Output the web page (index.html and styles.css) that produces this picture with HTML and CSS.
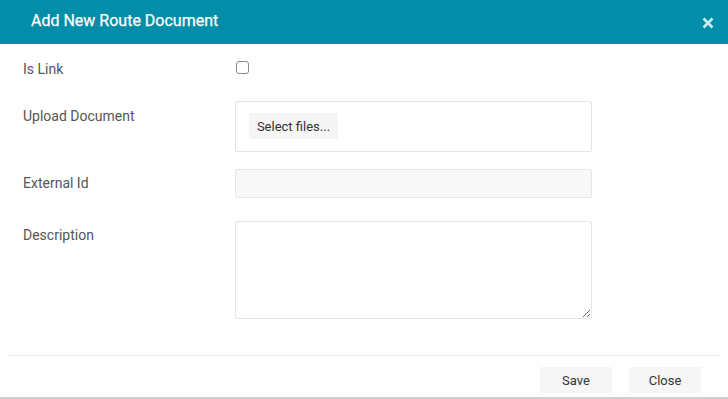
FILE: index.html
```html
<!DOCTYPE html>
<html lang="en">
  <head>
    <meta charset="UTF-8" />
    <meta name="viewport" content="width=device-width, initial-scale=1.0" />
    <title>Add New Route Document</title>
    <link rel="stylesheet" href="styles.css">
  </head>

  <body>
    <div class="dialog">
      <header class="dialog-header">
        <h1>Add New Route Document</h1>
        <button class="close-x" aria-label="Close">
          <svg width="12" height="12" viewBox="0 0 12 12">
            <path d="M1.5 1.5 L10.5 10.5 M10.5 1.5 L1.5 10.5" stroke="#cdeef3" stroke-width="2.6" fill="none" />
          </svg>
        </button>
      </header>

      <form class="dialog-body">
        <div class="row row-link">
          <label class="field-label">Is Link</label>
          <div class="field"><input type="checkbox" class="check" /></div>
        </div>

        <div class="row row-upload">
          <label class="field-label">Upload Document</label>
          <div class="field">
            <div class="upload-box">
              <button type="button" class="select-btn">Select files...</button>
            </div>
          </div>
        </div>

        <div class="row row-external">
          <label class="field-label">External Id</label>
          <div class="field"><input type="text" class="text-input" disabled /></div>
        </div>

        <div class="row row-desc">
          <label class="field-label">Description</label>
          <div class="field"><textarea class="text-area"></textarea></div>
        </div>
      </form>

      <footer class="dialog-footer">
        <button class="foot-btn">Save</button>
        <button class="foot-btn">Close</button>
      </footer>
    </div>
  </body>
</html>
```

FILE: styles.css
```css
body {
  margin: 0;
  font-family: Roboto, "Liberation Sans", sans-serif;
  background: #fff;
}

.dialog {
  width: 728px;
  height: 399px;
  box-sizing: border-box;
  border-bottom: 2px solid #cfcfcf;
  display: flex;
  flex-direction: column;
}

.dialog-header {
  height: 44px;
  background-color: #028ea9;
  display: flex;
  align-items: center;
  justify-content: space-between;
  padding: 0 14px 0 31px;
}

.dialog-header h1 {
  margin: 0;
  color: #fff;
  font-size: 16px;
  font-weight: 400;
  line-height: 20px;
  padding-bottom: 2px;
  -webkit-text-stroke: 0.25px #fff;
}

.close-x {
  background: none;
  border: none;
  padding: 0;
  margin-top: 1px;
  width: 12px;
  height: 12px;
  cursor: pointer;
  display: flex;
}

.dialog-body {
  padding: 15px 0 0 23px;
  margin: 0;
}

.row {
  display: flex;
}

.field-label {
  width: 212px;
  font-size: 14px;
  line-height: 20px;
  color: #555;
}

.field {
  width: 357px;
}

.row-link .check {
  appearance: none;
  -webkit-appearance: none;
  width: 13px;
  height: 13px;
  margin: 1px 0 0 1px;
  border: 1px solid #8a8a8a;
  border-radius: 3px;
  box-sizing: border-box;
  background: #fff;
}

.row-upload {
  margin-top: 22px;
}
.row-upload .field-label {
  padding-top: 5px;
}

.upload-box {
  border: 1px solid #e4e4e4;
  border-radius: 2px;
  padding: 11px 13px 12px;
  box-sizing: border-box;
  height: 51px;
}

.select-btn {
  height: 26px;
  width: 89px;
  border: none;
  background: #f5f5f5;
  color: #333;
  font-family: inherit;
  font-size: 13px;
  padding: 0;
}

.row-external {
  margin-top: 17px;
}
.row-external .field-label {
  padding-top: 4px;
}

.text-input {
  width: 100%;
  height: 29px;
  box-sizing: border-box;
  border: 1px solid #e6e6e6;
  border-radius: 2px;
  background: #f8f8f8;
  margin: 0;
  display: block;
}

.row-desc {
  margin-top: 23px;
}
.row-desc .field-label {
  padding-top: 4px;
}

.text-area {
  width: 100%;
  height: 98px;
  box-sizing: border-box;
  border: 1px solid #e6e6e6;
  border-radius: 2px;
  margin: 0;
  display: block;
  resize: both;
  font-family: inherit;
}

.dialog-footer {
  margin: 36px 7px 0;
  border-top: 1px solid #e8e8e8;
  padding: 11px 20px 0 0;
  display: flex;
  justify-content: flex-end;
  gap: 17px;
}

.foot-btn {
  width: 72px;
  height: 26px;
  border: none;
  background: #f6f6f6;
  color: #333;
  font-family: inherit;
  font-size: 13px;
  font-weight: 400;
  padding: 0;
}
```
